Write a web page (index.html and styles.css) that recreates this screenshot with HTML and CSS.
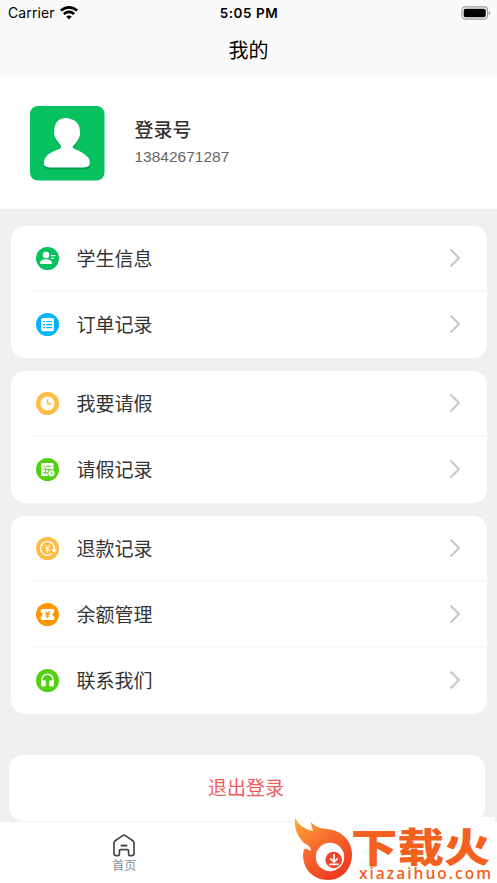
FILE: index.html
```
<!doctype html>
<html lang=zh-CN>
<head>
	<meta charset=utf-8>
	<title>我的</title>
	<link rel="stylesheet" href="styles.css">
</head>

<body>
	<header>
		<div class=status>
			<span class=carrier>Carrier
				<svg width=18 height=14 viewBox="0 0 18 14" fill=none stroke=#000 stroke-width=2.6>
					<path d="M.8 4.6Q9-2 17.2 4.6M3.8 8Q9 3.8 14.2 8"/>
					<path d="M6.2 10.6Q9 8.2 11.8 10.6L9 13.4Z" fill=#000 stroke=none />
				</svg>
			</span>
			<b class=time>5:05 PM</b>
			<svg class=battery width=30 height=14 viewBox="0 0 30 14">
				<rect x=.9 y=.9 width=25.6 height=12.2 rx=3.5 fill=none stroke=#999 stroke-width=1.1 />
				<rect x=2.7 y=2.7 width=22 height=8.6 rx=1.8 />
				<path d="M27.8 5Q30.4 7 27.8 9Z" fill=#888 />
			</svg>
		</div>
		<h1>我的</h1>
	</header>

	<section class=profile>
		<svg class=avatar viewBox="0 0 75 75">
			<defs>
				<path id=person d="M14 58C14 50 21 46 28 44C32 42.5 32 41 30 38.5C27 35 25 32 24.6 29.5C24 28 24 27 24.4 26C24 17 29 12 36 12C38.500 12 40 12.700 41 13.300C47 14.500 50.500 19 50.200 26C50.800 28 50.300 30 49.700 31C48 36 45.500 38 43 41C42 43 50 44.500 54 48C59 51 61 55 60 59C59 62 55 62 52 62H22C17 62 14 61 14 58Z"/>
			</defs>
			<rect width=75 height=75 rx=8 fill=#05c160 />
			<use href=#person fill=#049b4d y=1.8 />
			<use href=#person fill=#fff />
		</svg>
		<div>
			<h2>登录号</h2>
			<p>13842671287</p>
		</div>
	</section>

	<main>
		<section class=card>
			<a class=row>
				<svg class=icon viewBox="0 0 23 23"><circle cx=11.5 cy=11.5 r=11.5 fill=#05c160 /><g fill=#fff><circle cx=10 cy=8 r=3.3 /><path d="M4 15.800C4 13.500 7 12.200 10 12.200S16 13.500 16 15.800Q16 17 14.800 17H5.200Q4 17 4 15.800Z"/></g><path d="M15 8.7H19.3M15 11.3H18" stroke=#fff stroke-width=1.3 /></svg>
				<span>学生信息</span>
				<svg class=arrow viewBox="0 0 12 20"><path d="M1.5 1.5L10 10L1.5 18.5"/></svg>
			</a>
			<a class=row>
				<svg class=icon viewBox="0 0 23 23"><circle cx=11.5 cy=11.5 r=11.5 fill=#00b2ff /><rect x=5.1 y=5 width=12.9 height=13.2 rx=1.6 fill=#fff /><path d="M7 8.5H9M10.3 8.500H16M7 11.6H9M10.3 11.600H16M7 14.7H9M10.3 14.700H16" stroke=#00b2ff stroke-width=1.2 /></svg>
				<span>订单记录</span>
				<svg class=arrow viewBox="0 0 12 20"><path d="M1.5 1.5L10 10L1.5 18.5"/></svg>
			</a>
		</section>

		<section class=card>
			<a class=row>
				<svg class=icon viewBox="0 0 23 23"><circle cx=11.5 cy=11.5 r=11.5 fill=#ffbc42 /><circle cx=11.5 cy=11.5 r=7 fill=#fff /><path d="M11.5 7.2V11.800H15.3" fill=none stroke=#ffbc42 stroke-width=1.4 /></svg>
				<span>我要请假</span>
				<svg class=arrow viewBox="0 0 12 20"><path d="M1.5 1.5L10 10L1.5 18.5"/></svg>
			</a>
			<a class=row>
				<svg class=icon viewBox="0 0 23 23"><circle cx=11.5 cy=11.5 r=11.5 fill=#52cf0f /><rect x=5.2 y=5 width=12.2 height=13 rx=1 fill=#fff /><path d="M6.8 8.2H8.600M10 8.200H15.8M6.8 11.4H8.600M10 11.400H15.8M6.8 14.7H8.600M9.800 14.700H12M9.300 9V16.500" stroke=#52cf0f stroke-width=1 /><circle cx=15.4 cy=15.3 r=3.7 fill=#fff stroke=#52cf0f /><path d="M15.2 13.2V15.4H17.2" fill=none stroke=#52cf0f stroke-width=.9 /></svg>
				<span>请假记录</span>
				<svg class=arrow viewBox="0 0 12 20"><path d="M1.5 1.5L10 10L1.5 18.5"/></svg>
			</a>
		</section>

		<section class=card>
			<a class=row>
				<svg class=icon viewBox="0 0 23 23"><circle cx=11.5 cy=11.5 r=11.5 fill=#ffbc42 /><path d="M16 16.6A6.9 6.9 0 1 1 18.3 12" fill=none stroke=#fff stroke-width=1.4 /><path d="M14.8 12.300H20.9L18.400 15.800Z" fill=#fff /><path d="M9 8L11.4 11L13.8 8M11.4 11V15.5M9 11.2H13.8M9 13.4H13.8" fill=none stroke=#fff stroke-width=1 /></svg>
				<span>退款记录</span>
				<svg class=arrow viewBox="0 0 12 20"><path d="M1.5 1.5L10 10L1.5 18.5"/></svg>
			</a>
			<a class=row>
				<svg class=icon viewBox="0 0 23 23"><circle cx=11.5 cy=11.5 r=11.5 fill=#ff9500 /><path d="M6 6H17Q18.3 6 18.3 7.3V9.300Q16.600 9.800 16.600 11.5T18.3 13.700V15.7Q18.3 17 17 17H6Q4.7 17 4.7 15.7V13.700Q6.400 13.200 6.400 11.5T4.7 9.300V7.3Q4.7 6 6 6Z" fill=#fff /><path d="M9.4 8.300L11.5 10.7L13.600 8.300M11.5 10.7V15M9.4 11.1H13.600M9.4 13.1H13.600" fill=none stroke=#ff9500 stroke-width=1.1 /></svg>
				<span>余额管理</span>
				<svg class=arrow viewBox="0 0 12 20"><path d="M1.5 1.5L10 10L1.5 18.5"/></svg>
			</a>
			<a class=row>
				<svg class=icon viewBox="0 0 23 23"><circle cx=11.5 cy=11.5 r=11.5 fill=#52cf0f /><path d="M5.9 14V10.800A5.6 5.6 0 0 1 17.1 10.800V14" fill=none stroke=#fff stroke-width=1.4 /><rect x=5.2 y=11.2 width=4.6 height=6.4 rx=1.3 fill=#fff /><rect x=13.2 y=11.2 width=4.6 height=6.4 rx=1.3 fill=#fff /></svg>
				<span>联系我们</span>
				<svg class=arrow viewBox="0 0 12 20"><path d="M1.5 1.5L10 10L1.5 18.5"/></svg>
			</a>
		</section>

		<button class=logout>退出登录</button>
	</main>

	<nav>
		<a class=tab>
			<svg width=22 height=23 viewBox="0 0 22 23" fill=none stroke=#484848 stroke-width=1.7 stroke-linejoin=round>
				<path d="M10 1.4Q11 .8 12 1.4L19.8 6.7Q21 7.5 21 9V19.5Q21 21.7 18.8 21.7H16.7Q15.6 21.7 15.6 20.5V17Q15.6 15.6 14.2 15.6H7.8Q6.4 15.6 6.4 17V20.5Q6.4 21.7 5.3 21.7H3.2Q1 21.7 1 19.5V9Q1 7.5 2.2 6.7Z"/>
				<path d="M7.7 11.6H14.3" stroke-width=2 />
			</svg>
			首页
		</a>
		<a class="tab active">
			<svg width=22 height=23 viewBox="0 0 22 23" fill=#05c160>
				<circle cx=11 cy=6 r=5.5 />
				<path d="M1 21Q1 13 8 13H14Q21 13 21 21Z"/>
			</svg>
			我的
		</a>
	</nav>

	<svg class=watermark width=203 height=66 viewBox="292 817 203 66">
		<defs>
			<linearGradient id=flame x1=0 y1=0 x2=.65 y2=1>
				<stop offset=0 stop-color=#ffad36 />
				<stop offset=.5 stop-color=#f66a2c />
				<stop offset=1 stop-color=#ef3b24 />
			</linearGradient>
		</defs>
		<path d="M295 818C299 825 304 829 313 831C312 828 311 825 311 822C315 827 320 828 326 829C342 830 352 841 352 854C352 869 342 880 328 880C313 880 303 869 303 855C303 852 304 850 305 848L311 851C309 847 306 846 303 842C297 835 294 828 295 818Z" fill="url(#flame)"/>
		<path d="M303 843C307 844 311 847 311 850C309 849 306 848 303 849Z" fill=#fff />
		<circle cx=330 cy=857 r=14.2 fill=#fff />
		<circle cx=333.7 cy=860 r=8.3 fill=#ef4429 />
		<path d="M334 854V861M330.2 858.3L334 862L337.8 858.3M329 864.4H339" fill=none stroke=#fff stroke-width=1.7 />
		<g fill=#f4601e>
			<text class=brand transform="translate(351 861.500) scale(1.16 1)">下载火</text>
			<text class=domain x=359 y=879 textLength=132>xiazaihuo.com</text>
		</g>
	</svg>
</body>
</html>
```
FILE: styles.css
```
html, body {
	height: 100%;
	margin: 0;
}

body {
	display: flex;
	flex-direction: column;
	position: relative;
	overflow: hidden;
	background: #f0f0f0;
	color: #333;
	font-family: "Liberation Sans", "Noto Sans CJK SC", sans-serif;
}

h1, h2, p {
	margin: 0;
}

header {
	height: 77px;
	flex-shrink: 0;
	background: #fafafa;
	color: #000;

	h1 {
		font-size: 20px;
		font-weight: 400;
		line-height: 28px;
		text-align: center;
		padding-top: 11px;
	}
}

.status {
	display: grid;
	grid-template-columns: 1fr auto 1fr;
	align-items: center;
	height: 26px;
	padding: 0 6px 0 8px;
	font-family: Inter, sans-serif;
	font-size: 14px;
	line-height: 16px;

	.carrier {
		display: flex;
		align-items: center;
		gap: 5px;
		letter-spacing: 0.1px;
		padding-bottom: 1px;
	}

	.time {
		font-size: 13.5px;
		font-weight: 600;
		letter-spacing: 0.55px;
		padding-right: 1px;
	}

	.battery {
		justify-self: end;
		margin-bottom: 1px;
	}
}

.profile {
	display: flex;
	flex-shrink: 0;
	gap: 30px;
	height: 132px;
	box-sizing: border-box;
	padding: 29px 30px 0;
	background: #fff;

	.avatar {
		width: 74.5px;
		height: 74.5px;
	}

	h2 {
		font-size: 19px;
		font-weight: 500;
		line-height: 26px;
		padding-top: 12px;
	}

	p {
		color: #666;
		font-size: 15.5px;
		line-height: 26px;
	}
}

main {
	display: flex;
	flex: 1;
	flex-direction: column;
	gap: 13px;
	padding: 16.5px 10px 0 11px;
}

.card {
	border-radius: 14px;
	background: #fff;
}

.row {
	display: flex;
	align-items: center;
	height: 66px;
	padding: 0 26px 0 25px;
	font-size: 19px;
	background: linear-gradient(#f5f5f5, #f5f5f5) 19px 100% / 100% 1.5px no-repeat;

	&:last-child {background: none}

	.icon {
		width: 23px;
		height: 23px;
		margin-right: 17.5px;
	}

	span {
		flex: 1;
		padding-bottom: 2px;
	}

	.arrow {
		width: 12px;
		height: 20px;
		margin-bottom: 1px;
		fill: none;
		stroke: #c7c7c7;
		stroke-width: 2;
	}
}

.logout {
	height: 66px;
	margin: 28px 2px 0 -2px;
	padding: 0 2px 2px 0;
	border: none;
	border-radius: 14px;
	background: #fff;
	color: #f15b5b;
	font: inherit;
	font-size: 19px;
}

nav {
	display: flex;
	height: 61px;
	flex-shrink: 0;
	background: #fff;
}

.tab {
	display: flex;
	flex: 1;
	flex-direction: column;
	align-items: center;
	gap: 1px;
	padding-top: 12px;
	color: #888d93;
	font-size: 12px;
	line-height: 17px;

	&.active {color: #05c160}
}

.watermark {
	position: absolute;
	right: 2px;
	bottom: 0;
	background: rgba(255, 255, 255, 0.93);

	.brand {
		font-family: "Noto Sans CJK SC", sans-serif;
		font-size: 40px;
		font-weight: 900;
	}

	.domain {
		font-family: "Open Sans", sans-serif;
		font-size: 15.5px;
		font-weight: 600;
	}
}
```
